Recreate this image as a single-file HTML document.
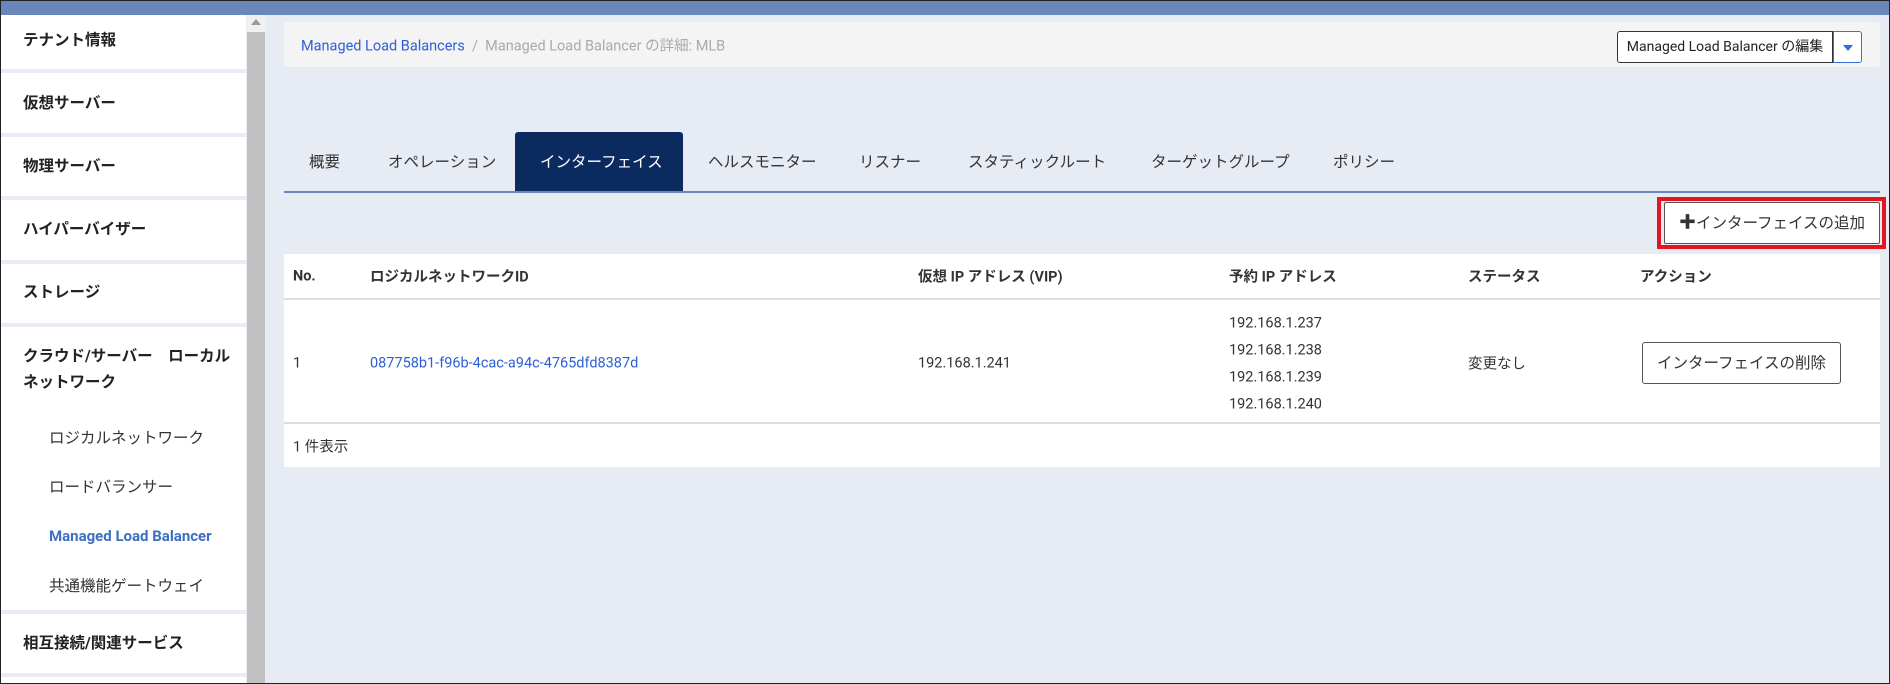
<!DOCTYPE html>
<html><head><meta charset="utf-8"><style>
*{box-sizing:border-box;margin:0;padding:0}
body{width:1890px;height:684px;overflow:hidden;background:#e6ebf4;font-family:"Roboto","Liberation Sans","Noto Sans CJK JP",sans-serif;color:#333;position:relative;font-size:14.5px}
.abs{position:absolute}
.top{left:0;top:0;width:1890px;height:15px;background:#6a87bb}
.frame{left:0;top:0;width:1890px;height:684px;border:1.5px solid #222;z-index:10}
.side{left:0;top:15px;width:246px;height:669px;background:#fff}
.sep{position:absolute;left:0;width:246px;height:4px;background:#e8edf5}
.si{position:absolute;left:23px;font-weight:bold;font-size:15.5px;color:#222;transform:translateY(-50%)}
.sub{position:absolute;left:49px;font-size:15.5px;color:#333;transform:translateY(-50%)}
.scroll{left:247px;top:15px;width:18px;height:669px;background:#c1c1c1}
.scrollt{left:247px;top:15px;width:18px;height:17px;background:#f0f0f0}
.bc{left:284px;top:22px;width:1596px;height:45px;background:#f4f4f4;border-radius:3px}
.tab{position:absolute;top:161px;transform:translateY(-50%);font-size:15.5px;color:#333}
.t{position:absolute;transform:translateY(-50%)}
</style></head><body>
<div class="abs top"></div>
<div class="abs side">
 <div class="si" style="top:24px">テナント情報</div>
 <div class="sep" style="top:54px"></div>
 <div class="si" style="top:87px">仮想サーバー</div>
 <div class="sep" style="top:118px"></div>
 <div class="si" style="top:150px">物理サーバー</div>
 <div class="sep" style="top:181px"></div>
 <div class="si" style="top:213px">ハイパーバイザー</div>
 <div class="sep" style="top:245px"></div>
 <div class="si" style="top:276px">ストレージ</div>
 <div class="sep" style="top:308px"></div>
 <div class="si" style="top:340px">クラウド/サーバー　ローカル</div>
 <div class="si" style="top:366px">ネットワーク</div>
 <div class="sub" style="top:422px">ロジカルネットワーク</div>
 <div class="sub" style="top:471px">ロードバランサー</div>
 <div class="sub" style="top:521px;color:#3d6fc0;font-weight:bold;font-size:15px">Managed Load Balancer</div>
 <div class="sub" style="top:570px">共通機能ゲートウェイ</div>
 <div class="sep" style="top:595px"></div>
 <div class="si" style="top:627px">相互接続/関連サービス</div>
 <div class="sep" style="top:658px"></div>
</div>
<div class="abs scroll"></div><div class="abs scrollt"><div style="margin:4px auto 0;width:0;height:0;border:5px solid transparent;border-bottom:6px solid #999;border-top:0"></div></div>
<div class="abs bc"></div>
<div class="t" style="left:301px;top:45px;color:#2f5fd6;font-size:14.5px">Managed Load Balancers <span style="color:#aaa">&nbsp;/&nbsp; Managed Load Balancer の詳細: MLB</span></div>
<div class="abs" style="left:1617px;top:31px;width:216px;height:32px;background:#fff;border:1px solid #333;border-radius:3px 0 0 3px;font-size:14px;line-height:30px;text-align:center;color:#222">Managed Load Balancer の編集</div>
<div class="abs" style="left:1833px;top:31px;width:29px;height:32px;background:#fff;border:1px solid #3a6fd6;border-radius:0 3px 3px 0"><div style="margin:13px auto 0;width:0;height:0;border-left:5px solid transparent;border-right:5px solid transparent;border-top:6px solid #2f6fd6"></div></div>
<div class="abs" style="left:515px;top:132px;width:168px;height:60px;background:#0b2b60;border-radius:3px 3px 0 0"></div>
<div class="abs" style="left:284px;top:191px;width:1596px;height:1.5px;background:#6a87bb"></div>
<div class="tab" style="left:309px">概要</div>
<div class="tab" style="left:388px">オペレーション</div>
<div class="tab" style="left:540px;color:#fff">インターフェイス</div>
<div class="tab" style="left:708px">ヘルスモニター</div>
<div class="tab" style="left:859px">リスナー</div>
<div class="tab" style="left:968px">スタティックルート</div>
<div class="tab" style="left:1151px">ターゲットグループ</div>
<div class="tab" style="left:1333px">ポリシー</div>
<div class="abs" style="left:1657px;top:197px;width:229px;height:52px;border:4px solid #e5141f"></div>
<div class="abs" style="left:1664px;top:202px;width:216px;height:42px;background:#fff;border:1px solid #555;border-radius:2px;font-size:15.5px;line-height:40px;text-align:center;color:#333"><b style="font-size:17px">✚</b>インターフェイスの追加</div>
<div class="abs" style="left:284px;top:254px;width:1596px;height:213px;background:#fff"></div>
<div class="abs" style="left:284px;top:298px;width:1596px;height:2px;background:#ddd"></div>
<div class="abs" style="left:284px;top:422px;width:1596px;height:2px;background:#ddd"></div>
<div class="t" style="left:293px;top:276px;font-weight:bold">No.</div>
<div class="t" style="left:370px;top:276px;font-weight:bold">ロジカルネットワークID</div>
<div class="t" style="left:918px;top:276px;font-weight:bold">仮想 IP アドレス (VIP)</div>
<div class="t" style="left:1229px;top:276px;font-weight:bold">予約 IP アドレス</div>
<div class="t" style="left:1468px;top:276px;font-weight:bold">ステータス</div>
<div class="t" style="left:1640px;top:276px;font-weight:bold">アクション</div>
<div class="t" style="left:293px;top:363px">1</div>
<div class="t" style="left:370px;top:363px;color:#2f5fd6">087758b1-f96b-4cac-a94c-4765dfd8387d</div>
<div class="t" style="left:918px;top:363px">192.168.1.241</div>
<div class="t" style="left:1229px;top:323px">192.168.1.237</div>
<div class="t" style="left:1229px;top:350px">192.168.1.238</div>
<div class="t" style="left:1229px;top:377px">192.168.1.239</div>
<div class="t" style="left:1229px;top:404px">192.168.1.240</div>
<div class="t" style="left:1468px;top:363px">変更なし</div>
<div class="abs" style="left:1642px;top:342px;width:199px;height:42px;border:1px solid #555;border-radius:3px;font-size:15.5px;line-height:40px;text-align:center;color:#333">インターフェイスの削除</div>
<div class="t" style="left:293px;top:446px">1 件表示</div>
<div class="abs frame"></div>
</body></html>
